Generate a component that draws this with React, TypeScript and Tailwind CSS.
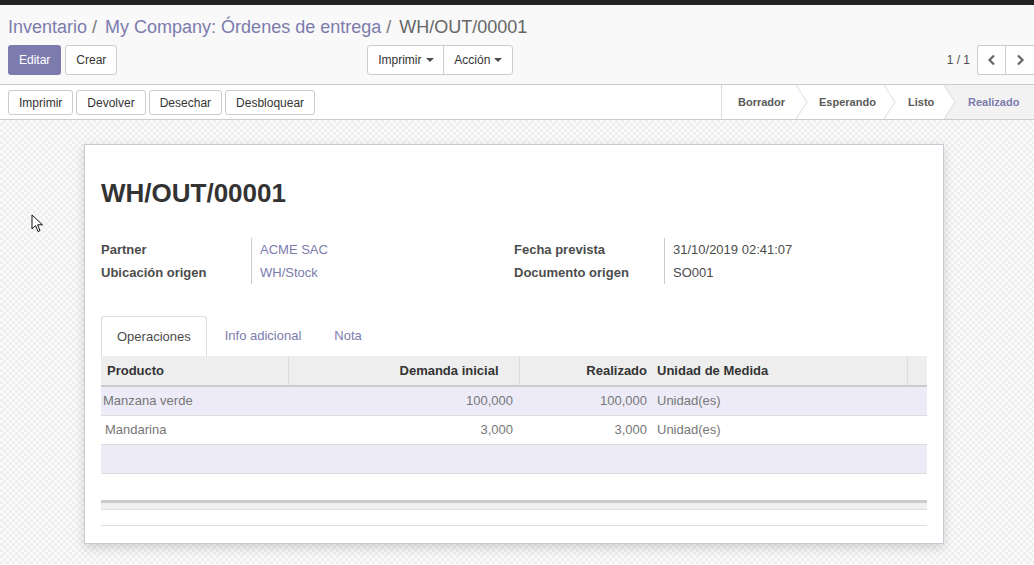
import React from "react";

const Caret = () => (
  <span className="ml-[4px] inline-block h-0 w-0 border-x-[4px] border-t-[4px] border-x-transparent border-t-[#4c4c4c] align-middle" />
);

const Chevron = ({ left }: { left?: boolean }) => (
  <svg width="10" height="12" viewBox="0 0 10 12" className="block">
    <path
      d={left ? "M7 1.5 L2.5 6 L7 10.5" : "M3 1.5 L7.5 6 L3 10.5"}
      fill="none"
      stroke="#666"
      strokeWidth="2.2"
    />
  </svg>
);

function Step({ label, active, last, pl }: { label: string; active?: boolean; last?: boolean; pl: string }) {
  return (
    <div
      className={`relative flex h-full items-center ${pl} pr-[10px] text-[11px] font-bold ${
        active ? "bg-[#f2f2f2] text-[#7c7bad]" : "bg-white text-[#5a5a5a]"
      }`}
    >
      {label}
      {!last && (
        <svg width="12" height="34" viewBox="0 0 12 34" className="absolute right-[-11px] top-0 z-10">
          <path d="M0 0 L11 17 L0 34" fill="white" stroke="#dcdcdc" strokeWidth="1" />
        </svg>
      )}
    </div>
  );
}

export default function App() {
  const font = { fontFamily: '"Liberation Sans", Arial, sans-serif' };
  return (
    <div className="relative h-[565px] w-[1034px] overflow-hidden bg-white text-[#4c4c4c]" style={font}>
      <div className="h-[5px] bg-[#222]" />
      {/* Control panel */}
      <div className="h-[80px] border-b border-[#ccc] bg-[#f9f9f9] pl-[8px]">
        <div className="flex h-[40px] items-center pt-[4px] text-[18px] leading-none">
          <span className="text-[#7c7bad]">Inventario</span>
          <span className="ml-[5px] mr-[8px] text-[#777]">/</span>
          <span className="text-[#7c7bad]">My Company: Órdenes de entrega</span>
          <span className="ml-[5px] mr-[8px] text-[#777]">/</span>
          <span className="text-[#666]">WH/OUT/00001</span>
        </div>
        <div className="flex h-[30px] items-center">
          <button className="h-[30px] rounded-[3px] bg-[#7c7bad] px-[11px] text-[12px] text-white">Editar</button>
          <button className="ml-[4px] h-[30px] rounded-[3px] border border-[#ccc] bg-white px-[10px] text-[12px] text-[#333]">
            Crear
          </button>
          <div className="ml-[250px] flex h-[30px] overflow-hidden rounded-[3px] border border-[#ccc] bg-white">
            <button className="flex w-[76px] items-center justify-center border-r border-[#ccc] text-[12px] text-[#333]">
              Imprimir
              <Caret />
            </button>
            <button className="flex w-[68px] items-center justify-center text-[12px] text-[#333]">
              Acción
              <Caret />
            </button>
          </div>
          <div className="ml-auto flex items-center">
            <span className="mr-[7px] text-[12px] text-[#4c4c4c]">1 / 1</span>
            <div className="flex h-[30px] w-[57px] overflow-hidden rounded-l-[3px] border border-r-0 border-[#ccc] bg-white">
              <div className="flex w-[28px] items-center justify-center border-r border-[#ccc]">
                <Chevron left />
              </div>
              <div className="flex w-[28px] items-center justify-center">
                <Chevron />
              </div>
            </div>
          </div>
        </div>
      </div>
      {/* Status bar */}
      <div className="flex h-[35px] items-center border-b border-[#ccc] bg-white pl-[8px]">
        <div className="flex gap-[3px] pt-[1px]">
          {["Imprimir", "Devolver", "Desechar", "Desbloquear"].map((b) => (
            <button
              key={b}
              className="h-[25px] rounded-[3px] border border-[#ccc] bg-white px-[10px] text-[12px] text-[#333]"
            >
              {b}
            </button>
          ))}
        </div>
        <div className="ml-auto flex h-full border-l border-[#ddd]">
          <div className="w-[75px]"><Step label="Borrador" pl="pl-[16px]" /></div>
          <div className="w-[88px]"><Step label="Esperando" pl="pl-[22px]" /></div>
          <div className="w-[60px]"><Step label="Listo" pl="pl-[23px]" /></div>
          <div className="w-[89px]"><Step label="Realizado" active last pl="pl-[23px]" /></div>
        </div>
      </div>
      {/* Sheet background */}
      <div className="h-[444px] bg-[repeating-conic-gradient(#efefef_0%_25%,#fafafa_0%_50%)] bg-[length:6px_6px] pl-[84px] pt-[24px]">
        <div className="h-[400px] w-[860px] border border-[#c9c9d4] bg-white px-[16px] shadow-[0_4px_10px_rgba(0,0,0,0.15)]">
          <h1 className="pt-[33px] text-[26px] font-bold leading-[30px] text-[#333]">WH/OUT/00001</h1>
          <div className="mt-[30px] flex text-[13px]">
            <div className="flex w-[413px]">
              <div className="w-[150px] font-bold leading-[23px] text-[#4c4c4c]">
                <div>Partner</div>
                <div>Ubicación origen</div>
              </div>
              <div className="border-l border-[#ccc] pl-[8px] leading-[23px] text-[#7c7bad]">
                <div>ACME SAC</div>
                <div>WH/Stock</div>
              </div>
            </div>
            <div className="flex">
              <div className="w-[150px] font-bold leading-[23px] text-[#4c4c4c]">
                <div>Fecha prevista</div>
                <div>Documento origen</div>
              </div>
              <div className="border-l border-[#ccc] pl-[8px] leading-[23px] text-[#4c4c4c]">
                <div>31/10/2019 02:41:07</div>
                <div>SO001</div>
              </div>
            </div>
          </div>
          {/* Tabs */}
          <div className="mt-[32px] flex h-[40px] text-[13px]">
            <div className="z-10 flex h-[40px] items-center rounded-t-[3px] border border-b-0 border-[#ddd] bg-white px-[15px] text-[#4c4c4c]">
              Operaciones
            </div>
            <div className="flex items-center pl-[18px] text-[#7c7bad]">Info adicional</div>
            <div className="flex items-center pl-[33px] text-[#7c7bad]">Nota</div>
          </div>
          {/* Table */}
          <table className="w-[826px] border-collapse text-[13px]">
            <thead>
              <tr className="h-[30px] border-b-2 border-[#ccc] bg-[#eee] font-bold text-[#333]">
                <th className="w-[187px] border-r border-[#ddd] pl-[6px] text-left">Producto</th>
                <th className="w-[231px] border-r border-[#ddd] pr-[20px] text-right">Demanda inicial</th>
                <th className="w-[134px] pr-[6px] text-right">Realizado</th>
                <th className="w-[254px] border-r border-[#ddd] pl-[4px] text-left">Unidad de Medida</th>
                <th className="w-[20px]" />
              </tr>
            </thead>
            <tbody className="text-[#777]">
              <tr className="h-[29px] border-b border-[#ddd] bg-[#edebf7]">
                <td className="pl-[2px]">Manzana verde</td>
                <td className="pr-[6px] text-right">100,000</td>
                <td className="pr-[6px] text-right">100,000</td>
                <td className="pl-[4px]">Unidad(es)</td>
                <td />
              </tr>
              <tr className="h-[29px] border-b border-[#ddd] bg-white">
                <td className="pl-[4px]">Mandarina</td>
                <td className="pr-[6px] text-right">3,000</td>
                <td className="pr-[6px] text-right">3,000</td>
                <td className="pl-[4px]">Unidad(es)</td>
                <td />
              </tr>
              <tr className="h-[29px] border-b border-[#ddd] bg-[#edebf7]">
                <td colSpan={5} />
              </tr>
              <tr className="h-[28px]">
                <td colSpan={5} />
              </tr>
            </tbody>
            <tfoot>
              <tr className="h-[8px] border-y border-t-[3px] border-[#ccc] border-b-[#ddd] bg-[#f0f0f0]">
                <td colSpan={5} />
              </tr>
              <tr className="h-[16px] border-b border-[#ddd]">
                <td colSpan={5} />
              </tr>
            </tfoot>
          </table>
        </div>
      </div>
      {/* Mouse cursor */}
      <svg width="14" height="20" viewBox="0 0 14 20" className="absolute left-[31px] top-[214px]">
        <path d="M1 1 L1 15 L4.5 11.5 L7 17.5 L9 16.6 L6.6 10.8 L11.5 10.8 Z" fill="white" stroke="#111" strokeWidth="1" strokeLinejoin="miter" />
      </svg>
    </div>
  );
}
